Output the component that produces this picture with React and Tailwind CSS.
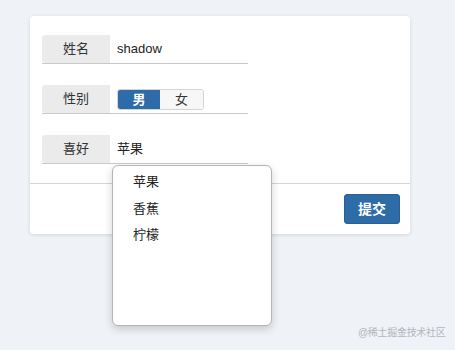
import { useState } from 'react'

const font = { fontFamily: '"Liberation Sans", "Noto Sans CJK SC", sans-serif' }

function Row({ label, children }) {
  return (
    <div className="flex h-[29px] w-[206px] border-b border-[#c9c9c9]">
      <div className="flex w-[68px] items-center justify-center rounded-l-[3px] bg-[#ebebeb] text-[13px] text-[#333]">
        {label}
      </div>
      <div className="flex flex-1 items-center pl-[7px] text-[13px] text-[#222]">{children}</div>
    </div>
  )
}

export default function App() {
  const [sex, setSex] = useState('男')
  const fruits = ['苹果', '香蕉', '柠檬']

  return (
    <div className="relative h-[350px] w-[455px] overflow-hidden bg-[#eff2f6]" style={font}>
      <div className="ml-[30px] mt-[16px] w-[380px] rounded-[4px] bg-white shadow-[0_1px_4px_rgba(0,0,0,0.12)]">
        <div className="flex flex-col gap-[21px] px-[12px] pb-[19px] pt-[19px]">
          <Row label="姓名">shadow</Row>
          <Row label="性别">
            <div className="flex h-[21px] overflow-hidden rounded-[3px] border border-[#d4d4d4]">
              {['男', '女'].map(s => (
                <button
                  key={s}
                  onClick={() => setSex(s)}
                  className={
                    sex === s
                      ? 'w-[42px] bg-[#2d6ba9] text-[13px] font-bold text-white'
                      : 'w-[43px] bg-[#f7f7f7] text-[13px] text-[#333]'
                  }
                >
                  {s}
                </button>
              ))}
            </div>
          </Row>
          <Row label="喜好">苹果</Row>
        </div>
        <div className="flex justify-end border-t border-[#d6d6d6] px-[10px] py-[10px]">
          <button className="h-[30px] w-[56px] rounded-[3px] border border-[#2a5f94] bg-[#2e6ca8] text-[14px] font-bold text-white">
            提交
          </button>
        </div>
      </div>

      <div className="absolute left-[112px] top-[165px] h-[161px] w-[160px] rounded-[6px] border border-[#b5b5b5] bg-white pt-[3px] shadow-[0_3px_8px_rgba(0,0,0,0.18)]">
        {fruits.map(f => (
          <div key={f} className="flex h-[26.3px] items-center pl-[20px] text-[13px] text-[#222]">
            {f}
          </div>
        ))}
      </div>

      <div className="absolute left-[358px] top-[325px] whitespace-nowrap text-[10px] tracking-[-0.3px] text-[#b3b6bd]">@稀土掘金技术社区</div>
    </div>
  )
}
